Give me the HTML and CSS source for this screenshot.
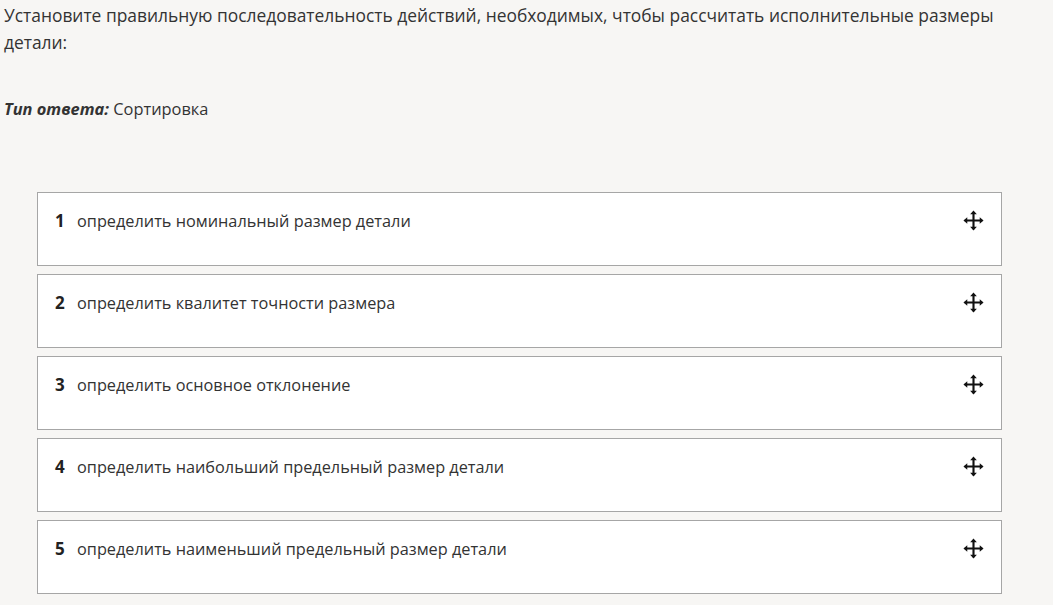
FILE: index.html
```html
<!DOCTYPE html>
<html lang="ru">
<head>
    <meta charset="UTF-8">
    <title>Сортировка</title>
    <link rel="stylesheet" href="styles.css">
</head>
<body>
    <div class="question">
        <p class="text">Установите правильную последовательность действий, необходимых, чтобы рассчитать исполнительные размеры детали:</p>
        <p class="type"><em>Тип ответа:</em> Сортировка</p>

        <ul class="sort-list">
            <li class="item"><span class="num">1</span><span class="label">определить номинальный размер детали</span><svg class="move" viewBox="0 0 24 24"><path d="M12 3v18M3 12h18"/><path class="head" d="M12 1.5l-3.5 4h7zM12 22.5l-3.5-4h7zM1.5 12l4-3.5v7zM22.5 12l-4-3.5v7z"/></svg></li>
            <li class="item"><span class="num">2</span><span class="label">определить квалитет точности размера</span><svg class="move" viewBox="0 0 24 24"><path d="M12 3v18M3 12h18"/><path class="head" d="M12 1.5l-3.5 4h7zM12 22.5l-3.5-4h7zM1.5 12l4-3.5v7zM22.5 12l-4-3.5v7z"/></svg></li>
            <li class="item"><span class="num">3</span><span class="label">определить основное отклонение</span><svg class="move" viewBox="0 0 24 24"><path d="M12 3v18M3 12h18"/><path class="head" d="M12 1.5l-3.5 4h7zM12 22.5l-3.5-4h7zM1.5 12l4-3.5v7zM22.5 12l-4-3.5v7z"/></svg></li>
            <li class="item"><span class="num">4</span><span class="label">определить наибольший предельный размер детали</span><svg class="move" viewBox="0 0 24 24"><path d="M12 3v18M3 12h18"/><path class="head" d="M12 1.5l-3.5 4h7zM12 22.5l-3.5-4h7zM1.5 12l4-3.5v7zM22.5 12l-4-3.5v7z"/></svg></li>
            <li class="item"><span class="num">5</span><span class="label">определить наименьший предельный размер детали</span><svg class="move" viewBox="0 0 24 24"><path d="M12 3v18M3 12h18"/><path class="head" d="M12 1.5l-3.5 4h7zM12 22.5l-3.5-4h7zM1.5 12l4-3.5v7zM22.5 12l-4-3.5v7z"/></svg></li>
        </ul>
    </div>
</body>
</html>
```

FILE: styles.css
```css
body { margin: 0; padding: 0 4px; background-color: #f7f6f4; font-family: "Open Sans", "Noto Sans", sans-serif; color: #333; }
.question { padding-top: 1px; }
.text { margin: 0; font-size: 17.4px; line-height: 27px; padding-top: 1px; }
.type { margin: 41px 0 0; font-size: 16.4px; line-height: 24px; }
.type em { font-weight: 700; font-style: italic; }
.sort-list { list-style: none; margin: 71px 0 0 33px; padding: 0; width: 965px; display: flex; flex-direction: column; gap: 8px; }
.item { display: flex; align-items: flex-start; background: #fff; border: 1px solid #a6a6a6; padding: 0 0 0 17px; box-sizing: border-box; height: 74px; }
.num { font-weight: 700; font-size: 17px; line-height: 20px; margin-top: 18px; width: 22px; color: #222; }
.label { flex: 1; font-size: 16.3px; line-height: 20px; margin-top: 18px; }
.move { width: 23px; height: 23px; margin: 16px 16px 0 0; }
.move path { stroke: #111; stroke-width: 2.2; fill: none; }
.move path.head { fill: #111; stroke: none; }
```
